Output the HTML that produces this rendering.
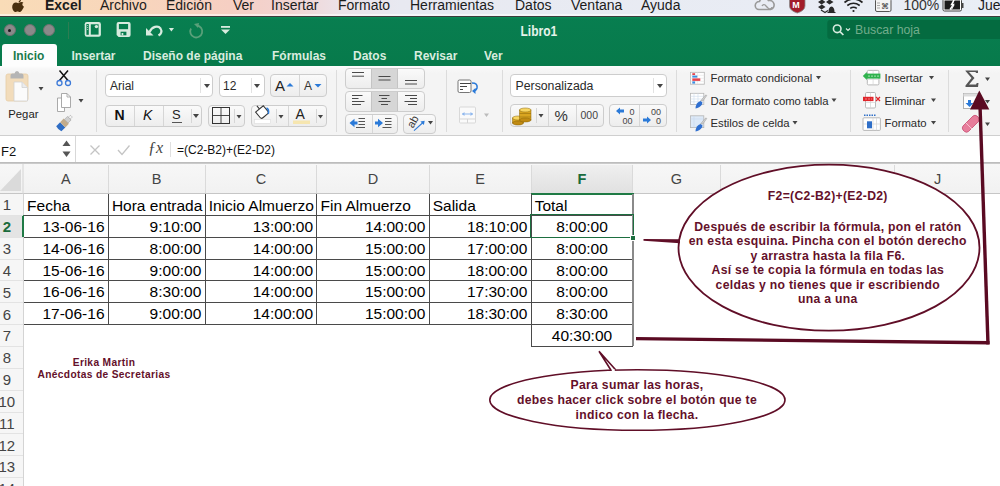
<!DOCTYPE html>
<html><head><meta charset="utf-8">
<style>
*{margin:0;padding:0;box-sizing:border-box}
html,body{width:1000px;height:486px;overflow:hidden;background:#fff;font-family:"Liberation Sans",sans-serif}
.a{position:absolute}
#menubar{left:0;top:0;width:1000px;height:16px;background:linear-gradient(90deg,#f9dcb7 0%,#f8d5bc 14%,#f6cfc3 23%,#f2d4d2 29%,#ece2e8 34%,#e8e9f1 40%,#e9eef6 100%);}
.mt{position:absolute;top:-3.5px;font-size:14px;color:#1c1c1c;white-space:nowrap}
#title{left:0;top:16px;width:1000px;height:50px;background:linear-gradient(#087e50,#077a4b)}
.tab{position:absolute;top:47.2px;transform:scaleY(1.14);transform-origin:0 0;font-size:12px;font-weight:bold;color:#d9ecdf;white-space:nowrap}
#ribbon{left:0;top:66px;width:1000px;height:70px;background:linear-gradient(#fdfdfd 0px,#f7f7f7 3px,#f4f4f4 8px);border-bottom:1px solid #cfcfcf}
.sep{position:absolute;width:1px;background:#dcdcdc}
.box{position:absolute;background:#fff;border:1px solid #cdcdcd;border-radius:4px}
.btn{position:absolute;background:linear-gradient(#fafafa,#ededed);border:1px solid #cdcdcd;border-radius:4px}
.dv{position:absolute;top:0;bottom:0;width:1px;background:#d6d6d6}
.arr{position:absolute;width:0;height:0;border-left:3px solid transparent;border-right:3px solid transparent;border-top:4.5px solid #444}
.rt{position:absolute;font-size:11.3px;color:#2a2a2a;white-space:nowrap}
#fbar{left:0;top:136px;width:1000px;height:26px;background:#fff}
#hdr{left:0;top:164px;width:1000px;height:29px;background:#f4f4f4;border-top:1px solid #d0d0d0;border-bottom:1px solid #c8c8c8}
.ch{position:absolute;top:8px;font-size:12.5px;color:#3c3c3c;text-align:center}
.rh{position:absolute;left:0;width:23px;font-size:12.5px;color:#3c3c3c;text-align:center}
.c{position:absolute;font-size:15.5px;color:#000;white-space:nowrap;margin-top:-0.7px}
</style></head><body>
<domain style="display:none">Computer-Use</domain>
<!-- MENU BAR -->
<div id="menubar" class="a">
  <div class="mt" style="left:45px;font-weight:bold">Excel</div>
  <div class="mt" style="left:100px">Archivo</div>
  <div class="mt" style="left:166px">Edición</div>
  <div class="mt" style="left:233px">Ver</div>
  <div class="mt" style="left:271px">Insertar</div>
  <div class="mt" style="left:338px">Formato</div>
  <div class="mt" style="left:410px">Herramientas</div>
  <div class="mt" style="left:515px">Datos</div>
  <div class="mt" style="left:571px">Ventana</div>
  <div class="mt" style="left:641px">Ayuda</div>
<svg class="a" style="left:0;top:0" width="1000" height="16">
 <!-- apple -->
 <path d="M18.3 3.2 C16.5 2.2 14.6 2.4 13.4 3.6 C11.6 5.4 11.9 9 13.6 11 C14.5 12 15.5 12.2 16.4 11.7 C17.3 11.3 17.8 11.3 18.6 11.7 C19.8 12.3 21 11.8 22 10.2 C22.6 9.2 23.5 8 24 6.8 C22 6 21.8 3.6 23.4 2.6 C22.1 1.4 20.2 2 18.3 3.2 Z" fill="#4a2f0e"/>
 <path d="M18.5 2.6 C18.6 1.2 19.6 0 21 -0.4 C21 1 20 2.4 18.5 2.6z" fill="#4a2f0e"/>
 <!-- creative cloud -->
 <path d="M759 9.5 a4 4 0 0 1 0.5 -8 a5 5 0 0 1 9 -1 a4.5 4.5 0 0 1 2 9 z" fill="none" stroke="#9a9a9a" stroke-width="1.6"/>
 <path d="M762 6 a2.2 2.2 0 0 1 4 0 l2 2 a2.2 2.2 0 0 0 4 -1" fill="none" stroke="#9a9a9a" stroke-width="1.3"/>
 <!-- mcafee -->
 <path d="M789.5 -1 h15.5 v7 q0 4.5 -7.75 7 q-7.75 -2.5 -7.75 -7z" fill="#a21d2a" stroke="#8a8a8a" stroke-width="0.8"/>
 <text x="792.3" y="8" font-family="Liberation Sans" font-weight="bold" font-size="9" fill="#fff">M</text>
 <!-- dropbox / bell -->
 <path d="M818 2 l4 -2.5 l3.5 2.5 l-4 2.5z M826 2 l3.5 -2.5 l4 2.5 l-4 2.5z M818 7 l4 -2.5 l3.5 2.5 l-4 2.5z" fill="#2a2a2a"/>
 <path d="M821 10 l4 2.5 l3 -2" fill="none" stroke="#2a2a2a" stroke-width="1.2"/>
 <path d="M828.5 12 q0 -5 3 -5.5 q3 0.5 3 5.5 h1 v1 h-8 v-1z" fill="#2a2a2a"/>
 <!-- wifi -->
 <path d="M844.5 2.5 q9 -7 18 0" fill="none" stroke="#222" stroke-width="1.6"/>
 <path d="M847.3 5.5 q6.2 -4.6 12.4 0" fill="none" stroke="#222" stroke-width="1.6"/>
 <path d="M850.2 8.4 q3.3 -2.4 6.6 0" fill="none" stroke="#222" stroke-width="1.6"/>
 <circle cx="853.5" cy="11" r="1.1" fill="#222"/>
 <!-- keyboard icon -->
 <rect x="875.5" y="-1" width="15.5" height="12.5" rx="1.5" fill="#f4f4f4" stroke="#555" stroke-width="1"/>
 <g stroke="#888" stroke-width="0.7"><line x1="877" y1="3" x2="880" y2="3"/><line x1="877" y1="5.5" x2="880" y2="5.5"/><line x1="877" y1="8" x2="880" y2="8"/></g>
 <text x="881" y="9" font-family="Liberation Sans" font-size="8" fill="#333">⌘</text>
 <!-- battery -->
 <rect x="943" y="-1" width="18.5" height="12" rx="1.5" fill="#fff" stroke="#444" stroke-width="1"/>
 <rect x="944.5" y="0.5" width="15.5" height="9" fill="#1c1c1c"/>
 <path d="M950 9.5 l3.5 -5 h-2 l2.5 -4.5" fill="none" stroke="#fff" stroke-width="1.4"/>
 <path d="M954 0.5 l-2 4.5 h2 l-2.5 4.5" fill="none" stroke="#fff" stroke-width="1.0"/>
 <rect x="962" y="3" width="1.5" height="5" fill="#444"/>
</svg>
<div class="mt" style="left:903.5px;color:#333">100%</div>
<div class="mt" style="left:978px">Jue</div>
</div>
<!-- TITLE BAR -->
<div id="title" class="a"></div>
<div class="a" style="left:0;top:13.8px;width:1000px;height:1.9px;background:rgba(255,255,255,0.55)"></div>
<div class="a" style="left:0;top:15.6px;width:1000px;height:1.1px;background:#3c3c3c"></div>
<div class="a" style="left:0;top:16.7px;width:1000px;height:2.5px;background:linear-gradient(#0d8b57,#087e50)"></div>
<!-- traffic lights -->
<div class="a" style="left:3.5px;top:24px;width:12px;height:12px;border-radius:50%;background:#8a8a8a;border:1px solid #6f6f6f"></div>
<div class="a" style="left:8px;top:28.5px;width:3px;height:3px;border-radius:50%;background:#1a1a1a"></div>
<div class="a" style="left:23.5px;top:24px;width:12px;height:12px;border-radius:50%;background:#8a8a8a;border:1px solid #6f6f6f"></div>
<div class="a" style="left:43px;top:24px;width:12px;height:12px;border-radius:50%;background:#8a8a8a;border:1px solid #6f6f6f"></div>
<div class="a" style="left:68px;top:22px;width:1px;height:17px;background:#2d7d52"></div>
<svg class="a" style="left:0;top:16px" width="1000" height="50">
 <!-- sheet icon -->
 <rect x="84.7" y="6.1" width="16.2" height="14.6" rx="2.2" fill="#d8ebdf"/>
 <rect x="86.4" y="8" width="2.4" height="10.8" fill="#077c4e"/>
 <g fill="#a9d0b8"><rect x="87.1" y="9" width="1" height="1"/><rect x="87.1" y="11" width="1" height="1"/><rect x="87.1" y="13" width="1" height="1"/></g>
 <rect x="90.8" y="8.3" width="7.8" height="10.3" fill="#077c4e"/>
 <circle cx="96.4" cy="10.6" r="1.7" fill="#d8ebdf"/>
 <!-- save icon -->
 <path d="M118.6 6.1 h10 q2 0 2 2 v10.9 q0 2 -2 2 h-10 l-2 -2 v-10.9 q0 -2 2 -2z" fill="#d8ebdf"/>
 <rect x="118.9" y="8" width="9.2" height="5.2" fill="#077c4e"/>
 <rect x="120.6" y="15.7" width="5.8" height="3.6" fill="#077c4e"/>
 <rect x="121.6" y="17" width="1.7" height="2.3" fill="#d8ebdf"/>
 <!-- undo -->
 <path d="M149.5 16 C152 10.5 158 9 160.5 12.5 C162.5 15.5 161 18 158.5 19.5" fill="none" stroke="#d8ebdf" stroke-width="2.2"/>
 <path d="M146 12 L146 19.5 L153.5 19.5z" fill="#d8ebdf"/>
 <path d="M168.8 12 h5.2 l-2.6 3.4z" fill="#d8ebdf"/>
 <!-- redo (faded) -->
 <path d="M197 9.5 a6 6 0 1 1 -6 3" fill="none" stroke="#5aa07a" stroke-width="1.8"/>
 <path d="M194 8 l5 -1 l-1 5z" fill="#5aa07a"/>
 <!-- customize -->
 <rect x="221" y="10" width="9" height="1.8" fill="#d8ebdf"/>
 <path d="M221 13.5 h9 l-4.5 4.5z" fill="#d8ebdf"/>
 <!-- search box -->
 <rect x="827.3" y="4" width="180" height="19" rx="3" fill="#046b40"/>
 <circle cx="837.2" cy="12.8" r="3.8" fill="none" stroke="#d8ebdf" stroke-width="1.6"/>
 <line x1="840" y1="15.6" x2="843.4" y2="19" stroke="#d8ebdf" stroke-width="1.7"/>
 <path d="M846 12.5 l2 2 l2 -2" fill="none" stroke="#d8ebdf" stroke-width="1.1"/>
</svg>
<div class="a" style="left:520.5px;top:22.6px;font-size:12px;font-weight:bold;color:#e6f2ea;transform:scaleY(1.15);transform-origin:0 0">Libro1</div>
<div class="a" style="left:855px;top:23px;font-size:12.3px;color:#72ad8c">Buscar hoja</div>
<div class="a" style="left:2px;top:44.3px;width:55px;height:22px;background:#fdfdfd;border-radius:3px 3px 0 0"></div>
<div class="a tab" style="left:13px;color:#1a7a4c">Inicio</div>
<div class="a tab" style="left:71.5px">Insertar</div>
<div class="a tab" style="left:143px">Diseño de página</div>
<div class="a tab" style="left:272px">Fórmulas</div>
<div class="a tab" style="left:353px">Datos</div>
<div class="a tab" style="left:414px">Revisar</div>
<div class="a tab" style="left:484px">Ver</div>
<!-- RIBBON -->
<div id="ribbon" class="a"></div>
<!-- separators -->
<div class="sep" style="left:96px;top:70px;height:62px"></div>
<div class="sep" style="left:336px;top:70px;height:62px"></div>
<div class="sep" style="left:445.5px;top:70px;height:62px"></div>
<div class="sep" style="left:502px;top:70px;height:62px"></div>
<div class="sep" style="left:675.5px;top:70px;height:62px"></div>
<div class="sep" style="left:849.5px;top:70px;height:62px"></div>
<div class="sep" style="left:947.8px;top:70px;height:62px"></div>
<!-- clipboard group -->
<svg class="a" style="left:0;top:66px" width="96" height="70">
 <rect x="6" y="8" width="22" height="27" rx="2" fill="#f2dcbb" stroke="#e6cda6" stroke-width="0.8"/>
 <path d="M10.5 12.5 v-3 q0 -2 2 -2 h2 q0.5 -2.5 2.5 -2.5 q2 0 2.5 2.5 h2 q2 0 2 2 v3z" fill="#b5b5b5"/>
 <path d="M14 16 h8 l5.5 5.5 v13.5 h-13.5z" fill="#fbfbfb" stroke="#d2d2d2" stroke-width="0.8"/>
 <path d="M22 16 v5.5 h5.5" fill="#ececec" stroke="#d2d2d2" stroke-width="0.8"/>
 <path d="M38.5 21 h5 l-2.5 3.5z" fill="#444"/>
 <!-- scissors -->
 <path d="M59.5 4.5 l8.5 10 M68 4.5 l-8.5 10" stroke="#111" stroke-width="1.5"/>
 <circle cx="59.5" cy="17" r="2.5" fill="none" stroke="#3d7ad8" stroke-width="1.3"/>
 <circle cx="68" cy="17" r="2.5" fill="none" stroke="#3d7ad8" stroke-width="1.3"/>
 <!-- copy -->
 <path d="M57.5 32 h5 l2 2 v11.5 h-7z" fill="#fff" stroke="#a0a0a0" stroke-width="0.9"/>
 <path d="M61.5 27.5 h5.5 l3.5 3.5 v10.5 h-9z" fill="#fff" stroke="#a0a0a0" stroke-width="0.9"/>
 <path d="M67 27.5 v3.5 h3.5" fill="none" stroke="#a0a0a0" stroke-width="0.8"/>
 <path d="M78.5 33 h5 l-2.5 3.5z" fill="#444"/>
 <!-- brush -->
 <g transform="translate(64.5 57) rotate(-45) scale(0.85)">
  <path d="M-9.5 -4.3 h6.5 v8.6 h-6.5 q-1.2 -4.3 0 -8.6z" fill="#2f6dc4"/>
  <rect x="-3" y="-4.3" width="6" height="8.6" fill="#c2ab8a"/>
  <rect x="3" y="-3" width="5" height="6" fill="#cfcfcf" stroke="#9a9a9a" stroke-width="0.6"/>
  <rect x="8" y="-1.6" width="3.5" height="3.2" rx="1" fill="#f4f4f4" stroke="#9a9a9a" stroke-width="0.6"/>
 </g>
</svg>
<div class="rt" style="left:8.3px;top:107.8px;font-size:11.3px;color:#222">Pegar</div>
<!-- font group -->
<div class="box" style="left:105px;top:74px;width:108px;height:23px"><div class="dv" style="left:94px;top:3px;bottom:3px;background:#e2e2e2"></div></div>
<div class="rt" style="left:110px;top:79px;font-size:12px">Arial</div>
<div class="arr" style="left:204px;top:84px"></div>
<div class="box" style="left:218.5px;top:74px;width:46px;height:23px"><div class="dv" style="left:31px;top:3px;bottom:3px;background:#e2e2e2"></div></div>
<div class="rt" style="left:223px;top:79px;font-size:12px">12</div>
<div class="arr" style="left:254px;top:84px"></div>
<div class="btn" style="left:269.5px;top:74px;width:57px;height:23px"><div class="dv" style="left:28px"></div></div>
<div class="btn" style="left:105px;top:104.5px;width:97px;height:22px"><div class="dv" style="left:28px"></div><div class="dv" style="left:57px"></div><div class="dv" style="left:84.5px;top:3px;bottom:3px"></div></div>
<div class="btn" style="left:207.5px;top:104.5px;width:37.5px;height:22px"><div class="dv" style="left:25px;top:3px;bottom:3px"></div></div>
<div class="btn" style="left:250.5px;top:104.5px;width:76px;height:22px"><div class="dv" style="left:24px;top:3px;bottom:3px"></div><div class="dv" style="left:36.5px"></div><div class="dv" style="left:64px;top:3px;bottom:3px"></div></div>
<div class="a" style="left:114.5px;top:107px;font-size:14px;font-weight:bold;color:#111">N</div>
<div class="a" style="left:143px;top:107px;font-size:14px;font-style:italic;color:#111">K</div>
<div class="a" style="left:172px;top:107px;font-size:13px;color:#222">S</div>
<div class="a" style="left:171.5px;top:121.5px;width:10px;height:1.2px;background:#555"></div>
<div class="arr" style="left:193px;top:114px"></div>
<svg class="a" style="left:0;top:66px" width="340" height="70">
 <!-- A up / A down -->
 <text x="275" y="24.5" font-family="Liberation Sans" font-size="15" fill="#222">A</text>
 <path d="M286.5 20.5 l3.5 -3.5 l3.5 3.5z" fill="#2b7ad8"/>
 <text x="304" y="23.5" font-family="Liberation Sans" font-size="12" fill="#333">A</text>
 <path d="M314.5 18 h7 l-3.5 3.5z" fill="#2b7ad8"/>
 <!-- borders grid -->
 <rect x="212.5" y="41.5" width="17" height="16" fill="none" stroke="#333" stroke-width="1"/>
 <line x1="221" y1="41.5" x2="221" y2="57.5" stroke="#333" stroke-width="0.9"/>
 <line x1="212.5" y1="49.5" x2="229.5" y2="49.5" stroke="#333" stroke-width="0.9"/>
 <path d="M236.5 49 h5 l-2.5 3.5z" fill="#444"/>
 <!-- fill bucket -->
 <g transform="rotate(-40 262 46)">
  <path d="M257 42 h10 v7 q0 2 -2 2 h-6 q-2 0 -2 -2z" fill="#fff" stroke="#333" stroke-width="1.1"/>
  <path d="M262 42 v-4" stroke="#333" stroke-width="1"/>
 </g>
 <path d="M266.5 42 q3 1.5 1.8 6" fill="none" stroke="#2b7ad8" stroke-width="1.5"/>
 <rect x="254.5" y="53.5" width="16" height="4" fill="#fff" stroke="#dcdcdc" stroke-width="0.6"/>
 <path d="M278.5 49 h5 l-2.5 3.5z" fill="#444"/>
 <!-- font color -->
 <text x="295.5" y="52.5" font-family="Liberation Sans" font-size="14" fill="#222">A</text>
 <rect x="293" y="54.5" width="17" height="3.5" fill="#f6e6b0"/>
 <path d="M318 49 h5 l-2.5 3.5z" fill="#444"/>
</svg>
<!-- alignment group -->
<div class="btn" style="left:344.5px;top:67.5px;width:80px;height:21px;overflow:hidden"><div class="a" style="left:25.5px;top:0;width:27px;height:21px;background:#d6d6d6;border-left:1px solid #c4c4c4;border-right:1px solid #c4c4c4"></div></div>
<div class="btn" style="left:344.5px;top:90.5px;width:80px;height:21px;overflow:hidden"><div class="a" style="left:25.5px;top:0;width:27px;height:21px;background:#d6d6d6;border-left:1px solid #c4c4c4;border-right:1px solid #c4c4c4"></div></div>
<div class="btn" style="left:344.5px;top:113.5px;width:53px;height:20px"><div class="dv" style="left:26px"></div></div>
<div class="btn" style="left:402.5px;top:113.5px;width:33.5px;height:20px"></div>
<svg class="a" style="left:336px;top:66px" width="170" height="70">
 <g stroke="#4a4a4a" stroke-width="1">
  <line x1="16" y1="6.5" x2="28" y2="6.5"/><line x1="16" y1="10.2" x2="28" y2="10.2"/>
  <line x1="42.5" y1="10.5" x2="54.5" y2="10.5"/><line x1="42.5" y1="14" x2="54.5" y2="14"/>
  <line x1="69" y1="14.5" x2="81" y2="14.5"/><line x1="69" y1="18" x2="81" y2="18"/>
  <line x1="16" y1="29.5" x2="26.5" y2="29.5"/><line x1="16" y1="32.5" x2="22.5" y2="32.5"/><line x1="16" y1="35.5" x2="28.5" y2="35.5"/><line x1="16" y1="38.5" x2="25" y2="38.5"/>
  <line x1="43" y1="29.5" x2="53.5" y2="29.5"/><line x1="45.5" y1="32.5" x2="51" y2="32.5"/><line x1="42.5" y1="35.5" x2="54.5" y2="35.5"/><line x1="45" y1="38.5" x2="52" y2="38.5"/>
  <line x1="69" y1="29.5" x2="81" y2="29.5"/><line x1="74" y1="32.5" x2="81" y2="32.5"/><line x1="68.5" y1="35.5" x2="81" y2="35.5"/><line x1="72" y1="38.5" x2="81" y2="38.5"/>
 </g>
 <g stroke="#555" stroke-width="1">
  <line x1="22.5" y1="52.5" x2="29" y2="52.5"/><line x1="22.5" y1="55.5" x2="29" y2="55.5"/><line x1="22.5" y1="58.5" x2="29" y2="58.5"/><line x1="20" y1="61.5" x2="29" y2="61.5"/>
  <line x1="49" y1="52.5" x2="55.5" y2="52.5"/><line x1="49" y1="55.5" x2="55.5" y2="55.5"/><line x1="49" y1="58.5" x2="55.5" y2="58.5"/><line x1="46.5" y1="61.5" x2="55.5" y2="61.5"/>
 </g>
 <path d="M13.5 57 l5 -4.2 v2.7 h3 v3 h-3 v2.7z" fill="#2b7ad8"/>
 <path d="M47 57 l-5 -4.2 v2.7 h-3 v3 h3 v2.7z" fill="#2b7ad8"/>
 <text x="0" y="4" text-anchor="middle" font-family="Liberation Sans" font-size="11" fill="#333" transform="translate(76.5 55.5) rotate(-60)">ab</text>
 <line x1="78" y1="64.7" x2="87" y2="56.5" stroke="#2b7ad8" stroke-width="1.1"/>
 <path d="M88.7 54.8 l-4.3 0.8 l3.5 3.5z" fill="#2b7ad8"/>
 <path d="M92 55 h5 l-2.5 3.5z" fill="#444"/>
 <!-- wrap text -->
 <rect x="122" y="14" width="13" height="12.5" rx="1.5" fill="#fff" stroke="#666" stroke-width="0.9"/>
 <g stroke="#444" stroke-width="1"><line x1="124" y1="17.5" x2="135" y2="17.5"/><line x1="124" y1="20.5" x2="131" y2="20.5"/><line x1="124" y1="23.5" x2="127" y2="23.5"/></g>
 <path d="M136 17 q6 0 5 5 q-1 3 -4 3" fill="none" stroke="#2b7ad8" stroke-width="1.6"/>
 <path d="M136 25 l3.5 -3 v6z" fill="#2b7ad8"/>
 <!-- merge -->
 <rect x="123.5" y="41" width="16" height="16" rx="1" fill="#fafafa" stroke="#d5d5d5" stroke-width="0.9"/>
 <line x1="123.5" y1="53" x2="139.5" y2="53" stroke="#d5d5d5"/>
 <line x1="131.5" y1="53" x2="131.5" y2="57" stroke="#d5d5d5"/>
 <line x1="126" y1="48" x2="137" y2="48" stroke="#8fb8ee" stroke-width="1"/>
 <path d="M126 48 l2.5 -2 v4z M137 48 l-2.5 -2 v4z" fill="#8fb8ee"/>
 <path d="M148 47.5 h5 l-2.5 3.5z" fill="#bbb"/>
</svg>
<!-- number group -->
<div class="box" style="left:510px;top:74px;width:156.5px;height:23px"><div class="dv" style="left:142px;top:3px;bottom:3px;background:#e2e2e2"></div></div>
<div class="rt" style="left:515.5px;top:79px;font-size:12.3px">Personalizada</div>
<div class="arr" style="left:656.5px;top:84px"></div>
<div class="btn" style="left:510px;top:104px;width:94px;height:23px"><div class="dv" style="left:25px;top:3px;bottom:3px"></div><div class="dv" style="left:36.5px"></div><div class="dv" style="left:65px"></div></div>
<div class="btn" style="left:609px;top:104px;width:57.5px;height:23px"><div class="dv" style="left:28.5px"></div></div>
<svg class="a" style="left:500px;top:66px" width="180" height="70">
 <g stroke="#8a6508" stroke-width="0.5">
 <rect x="12.5" y="52" width="11" height="5" fill="#d9a520"/>
 <ellipse cx="18" cy="57" rx="5.5" ry="2" fill="#c08a12"/>
 <ellipse cx="18" cy="52" rx="5.5" ry="2" fill="#f7d561"/>
 <rect x="19.5" y="44" width="11.5" height="10" fill="#d9a520"/>
 <line x1="19.5" y1="47.5" x2="31" y2="47.5"/><line x1="19.5" y1="51" x2="31" y2="51"/>
 <ellipse cx="25.25" cy="54" rx="5.75" ry="2" fill="#c08a12"/>
 <ellipse cx="25.25" cy="44" rx="5.75" ry="2" fill="#f7d561"/>
 </g>
 <path d="M38.5 48 h5 l-2.5 3.5z" fill="#444"/>
 <text x="554.5" y="55" font-family="Liberation Sans" font-size="15" fill="#333" transform="translate(-500 0)">%</text>
 <text x="580.5" y="53" font-family="Liberation Sans" font-size="10.5" fill="#444" transform="translate(-500 0)">000</text>
 <path d="M116 45 l4 -3.5 v2 h4 v3 h-4 v2z" fill="#2b7ad8"/>
 <text x="129.5" y="48.5" font-family="Liberation Sans" font-size="9" fill="#444">0</text>
 <text x="122.5" y="57.5" font-family="Liberation Sans" font-size="9" fill="#444">00</text>
 <text x="151" y="48.5" font-family="Liberation Sans" font-size="9" fill="#444">00</text>
 <text x="156" y="57.5" font-family="Liberation Sans" font-size="9" fill="#444">0</text>
 <path d="M151 54 l-4 -3.5 v2 h-4 v3 h4 v2z" fill="#2b7ad8"/>
</svg>
<!-- styles group -->
<svg class="a" style="left:680px;top:66px" width="320" height="70">
 <!-- cond format -->
 <rect x="10.5" y="6.3" width="13.8" height="11.9" fill="#fff" stroke="#b5b5b5" stroke-width="0.8"/>
 <g stroke="#e3e3e3" stroke-width="0.6"><line x1="10.5" y1="9.3" x2="24.3" y2="9.3"/><line x1="10.5" y1="12.3" x2="24.3" y2="12.3"/><line x1="10.5" y1="15.3" x2="24.3" y2="15.3"/><line x1="17.4" y1="6.3" x2="17.4" y2="18.2"/></g>
 <rect x="12.3" y="7.2" width="2.8" height="1.8" fill="#e5424d"/>
 <rect x="12.3" y="9.6" width="5" height="2" fill="#3d8ee0"/>
 <rect x="12.3" y="12.4" width="8" height="2.5" fill="#e5424d"/>
 <rect x="12.3" y="15.4" width="2.8" height="2.2" fill="#3d8ee0"/>
 <!-- table format -->
 <rect x="10.5" y="27.3" width="13.3" height="11.2" fill="#fff" stroke="#b5b5b5" stroke-width="0.8"/>
 <g stroke="#cfdcec" stroke-width="0.6"><line x1="10.5" y1="30.3" x2="23.8" y2="30.3"/><line x1="10.5" y1="33" x2="23.8" y2="33"/><line x1="10.5" y1="35.8" x2="23.8" y2="35.8"/><line x1="14" y1="27.3" x2="14" y2="38.5"/><line x1="18" y1="27.3" x2="18" y2="38.5"/></g>
 <path d="M20.5 35 l4.5 -5.5 q1.2 -1 1.8 0 l-4 5.5z" fill="#d0d0d0" stroke="#999" stroke-width="0.5"/>
 <path d="M15.5 42.5 q0 -4 3 -6.5 l2 -1 l2 1.5 l-0.5 2 q-2.5 3.5 -6.5 4z" fill="#2f6fd0"/>
 <!-- cell styles -->
 <rect x="10.5" y="49.8" width="13.3" height="11.8" fill="#dde9f7" stroke="#b5b5b5" stroke-width="0.8"/>
 <g stroke="#c7d8ee" stroke-width="0.6"><line x1="10.5" y1="53" x2="23.8" y2="53"/><line x1="14" y1="49.8" x2="14" y2="61.6"/></g>
 <path d="M20.5 58 l4.5 -5.5 q1.2 -1 1.8 0 l-4 5.5z" fill="#d0d0d0" stroke="#999" stroke-width="0.5"/>
 <path d="M15.5 65.5 q0 -4 3 -6.5 l2 -1 l2 1.5 l-0.5 2 q-2.5 3.5 -6.5 4z" fill="#2f6fd0"/>
 <path d="M136 10 h5 l-2.5 3.5z" fill="#444"/>
 <path d="M151.5 32.5 h5 l-2.5 3.5z" fill="#444"/>
 <path d="M112.5 55 h5 l-2.5 3.5z" fill="#444"/>
 <!-- insert cells -->
 <rect x="187.3" y="4.4" width="11.6" height="14.5" rx="1.2" fill="#fff" stroke="#b0b0b0" stroke-width="0.9"/>
 <g stroke="#d4d4d4" stroke-width="0.7"><line x1="187.3" y1="13.5" x2="198.9" y2="13.5"/><line x1="193.1" y1="4.4" x2="193.1" y2="18.9"/></g>
 <rect x="186" y="7.6" width="14.4" height="5" fill="#2fb24c"/>
 <path d="M182.8 10.1 l4 -4 v8z" fill="#2fb24c"/>
 <line x1="188" y1="10.1" x2="199" y2="10.1" stroke="#c9efd2" stroke-width="0.8" stroke-dasharray="2 1"/>
 <!-- delete cells -->
 <rect x="185.5" y="26.5" width="10" height="15.5" rx="1.2" fill="#fff" stroke="#b0b0b0" stroke-width="0.9"/>
 <g stroke="#d4d4d4" stroke-width="0.7"><line x1="185.5" y1="36.5" x2="195.5" y2="36.5"/><line x1="190.5" y1="26.5" x2="190.5" y2="42"/></g>
 <rect x="183" y="30.8" width="10.5" height="4.3" fill="#e0252b"/>
 <line x1="185" y1="33" x2="192" y2="33" stroke="#f5b0b2" stroke-width="0.7" stroke-dasharray="2 1"/>
 <path d="M196 31 l4 4 M200 31 l-4 4" stroke="#e0252b" stroke-width="1.3"/>
 <!-- format cells -->
 <rect x="183" y="51.8" width="17.4" height="12.6" rx="1" fill="#fff" stroke="#b0b0b0" stroke-width="0.9"/>
 <g stroke="#d4d4d4" stroke-width="0.7"><line x1="183" y1="58" x2="200.4" y2="58"/><line x1="193" y1="51.8" x2="193" y2="64.4"/><line x1="196.5" y1="51.8" x2="196.5" y2="64.4"/></g>
 <rect x="187" y="55.3" width="5" height="7" fill="#2f6fc8"/>
 <path d="M184 49.3 h12.5" stroke="#2f6fc8" stroke-width="1.6" stroke-dasharray="1.5 1"/>
 <path d="M249 10 h5 l-2.5 3.5z" fill="#444"/>
 <path d="M251 32.5 h5 l-2.5 3.5z" fill="#444"/>
 <path d="M251 55 h5 l-2.5 3.5z" fill="#444"/>
 <!-- sigma -->
 <path d="M285.5 4.5 h12.5 v2.5 h-2 l-0.5 -1 h-6.5 l5.5 6 l-5.5 6.5 h7 l0.8 -1.5 h1.7 l-0.5 4 h-12.5 l0 -1.5 l6 -7.5 l-6 -7z" fill="#555"/>
 <path d="M305 11.5 h5 l-2.5 3.5z" fill="#444"/>
 <!-- fill -->
 <rect x="283.5" y="27.5" width="15" height="15" fill="#fff" stroke="#aaa" stroke-width="0.9"/>
 <rect x="283.5" y="27.5" width="15" height="3" fill="#ddd"/>
 <path d="M288 34 h3 v3 h2.5 l-4 4 l-4 -4 h2.5z" fill="#2b7ad8"/>
 <!-- eraser -->
 <path d="M283 60 l10 -10 q2 -1.5 4 0 l1.5 1.5 q1.5 2 0 4 l-10 10 q-2 1.5 -4 0 l-1.5 -1.5 q-1.5 -2 0 -4z" fill="#e77d9b" stroke="#c64a70" stroke-width="0.8"/>
 <path d="M286 57 l6 6" stroke="#f7c1d0" stroke-width="1"/>
 <path d="M305 34 h5 l-2.5 3.5z" fill="#444"/>
 <path d="M305 56.5 h5 l-2.5 3.5z" fill="#444"/>
</svg>
<div class="rt" style="left:710.5px;top:71.5px">Formato condicional</div>
<div class="rt" style="left:710.5px;top:94.6px">Dar formato como tabla</div>
<div class="rt" style="left:710.5px;top:117px">Estilos de celda</div>
<div class="rt" style="left:884.5px;top:71.5px">Insertar</div>
<div class="rt" style="left:884.5px;top:94.6px">Eliminar</div>
<div class="rt" style="left:884.5px;top:117px">Formato</div>
<!-- FORMULA BAR -->
<div id="fbar" class="a"></div>
<div class="a" style="left:1px;top:143.5px;font-size:13px;color:#111">F2</div>
<svg class="a" style="left:0;top:136px" width="300" height="26">
 <path d="M62.5 10 l4 -5.5 l4 5.5z" fill="#555"/>
 <path d="M62.5 15.5 l4 5.5 l4 -5.5z" fill="#555"/>
 <line x1="75.5" y1="0" x2="75.5" y2="26" stroke="#d8d8d8"/>
 <path d="M90.5 9.5 l9 9 M99.5 9.5 l-9 9" stroke="#c4c4c4" stroke-width="1.3"/>
 <path d="M118 14 l4 4.5 l7.5 -9" fill="none" stroke="#c4c4c4" stroke-width="1.3"/>
 <line x1="170.5" y1="6" x2="170.5" y2="21" stroke="#e0e0e0"/>
</svg>
<div class="a" style="left:148px;top:139px;font-family:'Liberation Serif',serif;font-style:italic;font-size:16px;color:#444">ƒx</div>
<div class="a" style="left:177px;top:143px;font-size:12px;color:#111">=(C2-B2)+(E2-D2)</div>
<div class="a" style="left:0;top:161.5px;width:1000px;height:3px;background:#cacaca;border-top:1px solid #bdbdbd;border-bottom:1px solid #c2c2c2"></div>
<!-- HEADERS -->
<div class="a" style="left:0;top:164px;width:1000px;height:29.5px;background:linear-gradient(#f7f7f7,#f1f1f1)"></div>
<div class="a" style="left:0;top:192.8px;width:1000px;height:1.6px;background:#c6c6c6"></div>
<svg class="a" style="left:0;top:164px" width="24" height="30"><path d="M0 27 L21 5 L21 27z" fill="#dadada"/><line x1="23" y1="0" x2="23" y2="30" stroke="#d4d4d4"/></svg>
<div class="a" style="left:531.1px;top:164.5px;width:101.8px;height:29px;background:linear-gradient(#efefef,#e0e0e0)"></div>
<div class="a" style="left:107.8px;top:165px;width:1px;height:28px;background:#dadada"></div>
<div class="a" style="left:204.6px;top:165px;width:1px;height:28px;background:#dadada"></div>
<div class="a" style="left:316.4px;top:165px;width:1px;height:28px;background:#dadada"></div>
<div class="a" style="left:428.6px;top:165px;width:1px;height:28px;background:#dadada"></div>
<div class="a" style="left:530.6px;top:165px;width:1px;height:28px;background:#dadada"></div>
<div class="a" style="left:632.4px;top:165px;width:1px;height:28px;background:#dadada"></div>
<div class="a" style="left:719.5px;top:165px;width:1px;height:28px;background:#dadada"></div>
<div class="a" style="left:806.5px;top:165px;width:1px;height:28px;background:#dadada"></div>
<div class="a" style="left:893.5px;top:165px;width:1px;height:28px;background:#dadada"></div>
<div class="a" style="left:980.5px;top:165px;width:1px;height:28px;background:#dadada"></div>
<div class="a" style="left:23.5px;width:84.8px;top:169px;line-height:20px;text-align:center;font-size:14.5px;color:#444;font-weight:normal">A</div>
<div class="a" style="left:108.3px;width:96.8px;top:169px;line-height:20px;text-align:center;font-size:14.5px;color:#444;font-weight:normal">B</div>
<div class="a" style="left:205.1px;width:111.8px;top:169px;line-height:20px;text-align:center;font-size:14.5px;color:#444;font-weight:normal">C</div>
<div class="a" style="left:316.9px;width:112.2px;top:169px;line-height:20px;text-align:center;font-size:14.5px;color:#444;font-weight:normal">D</div>
<div class="a" style="left:429.1px;width:102.0px;top:169px;line-height:20px;text-align:center;font-size:14.5px;color:#444;font-weight:normal">E</div>
<div class="a" style="left:531.1px;width:101.8px;top:169px;line-height:20px;text-align:center;font-size:14.5px;color:#1a6b3c;font-weight:bold">F</div>
<div class="a" style="left:632.9px;width:87.1px;top:169px;line-height:20px;text-align:center;font-size:14.5px;color:#444;font-weight:normal">G</div>
<div class="a" style="left:720px;width:87.0px;top:169px;line-height:20px;text-align:center;font-size:14.5px;color:#444;font-weight:normal">H</div>
<div class="a" style="left:807px;width:87.0px;top:169px;line-height:20px;text-align:center;font-size:14.5px;color:#444;font-weight:normal">I</div>
<div class="a" style="left:894px;width:87.0px;top:169px;line-height:20px;text-align:center;font-size:14.5px;color:#444;font-weight:normal">J</div>
<div class="a" style="left:531.1px;top:192.5px;width:102.8px;height:2px;background:#1f7a45"></div>
<div class="a" style="left:0;top:193.5px;width:23px;height:292.5px;background:#f6f6f6"></div>
<div class="a" style="left:22.5px;top:193.5px;width:1px;height:292.5px;background:#d4d4d4"></div>
<div class="a" style="left:0;top:215.35px;width:22.5px;height:21.85px;background:#e4e4e4"></div>
<div class="a" style="left:22px;top:215.35px;width:2px;height:21.85px;background:#1f7a45"></div>
<div class="a" style="left:0;top:214.85px;width:23px;height:1px;background:#e3e3e3"></div>
<div class="a" style="left:0;top:236.70px;width:23px;height:1px;background:#e3e3e3"></div>
<div class="a" style="left:0;top:258.55px;width:23px;height:1px;background:#e3e3e3"></div>
<div class="a" style="left:0;top:280.40px;width:23px;height:1px;background:#e3e3e3"></div>
<div class="a" style="left:0;top:302.25px;width:23px;height:1px;background:#e3e3e3"></div>
<div class="a" style="left:0;top:324.10px;width:23px;height:1px;background:#e3e3e3"></div>
<div class="a" style="left:0;top:345.95px;width:23px;height:1px;background:#e3e3e3"></div>
<div class="a" style="left:0;top:367.80px;width:23px;height:1px;background:#e3e3e3"></div>
<div class="a" style="left:0;top:389.65px;width:23px;height:1px;background:#e3e3e3"></div>
<div class="a" style="left:0;top:411.50px;width:23px;height:1px;background:#e3e3e3"></div>
<div class="a" style="left:0;top:433.35px;width:23px;height:1px;background:#e3e3e3"></div>
<div class="a" style="left:0;top:455.20px;width:23px;height:1px;background:#e3e3e3"></div>
<div class="a" style="left:0;top:477.05px;width:23px;height:1px;background:#e3e3e3"></div>
<div class="a" style="left:0;top:498.90px;width:23px;height:1px;background:#e3e3e3"></div>
<div class="a" style="left:-2.7px;width:19px;margin-top:-0.4px;top:194.68px;line-height:22px;text-align:center;font-size:15px;color:#444;font-weight:normal">1</div>
<div class="a" style="left:-2.7px;width:19px;margin-top:-0.4px;top:216.53px;line-height:22px;text-align:center;font-size:15px;color:#1a6b3c;font-weight:bold">2</div>
<div class="a" style="left:-2.7px;width:19px;margin-top:-0.4px;top:238.38px;line-height:22px;text-align:center;font-size:15px;color:#444;font-weight:normal">3</div>
<div class="a" style="left:-2.7px;width:19px;margin-top:-0.4px;top:260.23px;line-height:22px;text-align:center;font-size:15px;color:#444;font-weight:normal">4</div>
<div class="a" style="left:-2.7px;width:19px;margin-top:-0.4px;top:282.08px;line-height:22px;text-align:center;font-size:15px;color:#444;font-weight:normal">5</div>
<div class="a" style="left:-2.7px;width:19px;margin-top:-0.4px;top:303.93px;line-height:22px;text-align:center;font-size:15px;color:#444;font-weight:normal">6</div>
<div class="a" style="left:-2.7px;width:19px;margin-top:-0.4px;top:325.78px;line-height:22px;text-align:center;font-size:15px;color:#444;font-weight:normal">7</div>
<div class="a" style="left:-2.7px;width:19px;margin-top:-0.4px;top:347.63px;line-height:22px;text-align:center;font-size:15px;color:#444;font-weight:normal">8</div>
<div class="a" style="left:-2.7px;width:19px;margin-top:-0.4px;top:369.48px;line-height:22px;text-align:center;font-size:15px;color:#444;font-weight:normal">9</div>
<div class="a" style="left:-2.7px;width:19px;margin-top:-0.4px;top:391.33px;line-height:22px;text-align:center;font-size:15px;color:#444;font-weight:normal">10</div>
<div class="a" style="left:-2.7px;width:19px;margin-top:-0.4px;top:413.18px;line-height:22px;text-align:center;font-size:15px;color:#444;font-weight:normal">11</div>
<div class="a" style="left:-2.7px;width:19px;margin-top:-0.4px;top:435.03px;line-height:22px;text-align:center;font-size:15px;color:#444;font-weight:normal">12</div>
<div class="a" style="left:-2.7px;width:19px;margin-top:-0.4px;top:456.88px;line-height:22px;text-align:center;font-size:15px;color:#444;font-weight:normal">13</div>
<div class="a" style="left:-2.7px;width:19px;margin-top:-0.4px;top:478.73px;line-height:22px;text-align:center;font-size:15px;color:#444;font-weight:normal">14</div>
<div class="a" style="left:23.5px;top:214.85px;width:507.6px;height:1px;background:#4a4a4a"></div>
<div class="a" style="left:23.5px;top:236.70px;width:507.6px;height:1px;background:#4a4a4a"></div>
<div class="a" style="left:23.5px;top:258.55px;width:507.6px;height:1px;background:#4a4a4a"></div>
<div class="a" style="left:23.5px;top:280.40px;width:507.6px;height:1px;background:#4a4a4a"></div>
<div class="a" style="left:23.5px;top:302.25px;width:507.6px;height:1px;background:#4a4a4a"></div>
<div class="a" style="left:23.5px;top:324.10px;width:507.6px;height:1px;background:#4a4a4a"></div>
<div class="a" style="left:531.1px;top:214.85px;width:101.8px;height:1px;background:#4a4a4a"></div>
<div class="a" style="left:531.1px;top:236.70px;width:101.8px;height:1px;background:#4a4a4a"></div>
<div class="a" style="left:531.1px;top:258.55px;width:101.8px;height:1px;background:#4a4a4a"></div>
<div class="a" style="left:531.1px;top:280.40px;width:101.8px;height:1px;background:#4a4a4a"></div>
<div class="a" style="left:531.1px;top:302.25px;width:101.8px;height:1px;background:#4a4a4a"></div>
<div class="a" style="left:531.1px;top:324.10px;width:101.8px;height:1px;background:#4a4a4a"></div>
<div class="a" style="left:531.1px;top:345.95px;width:101.8px;height:1px;background:#4a4a4a"></div>
<div class="a" style="left:107.8px;top:193.5px;width:1px;height:131.10px;background:#4a4a4a"></div>
<div class="a" style="left:204.6px;top:193.5px;width:1px;height:131.10px;background:#4a4a4a"></div>
<div class="a" style="left:316.4px;top:193.5px;width:1px;height:131.10px;background:#4a4a4a"></div>
<div class="a" style="left:428.6px;top:193.5px;width:1px;height:131.10px;background:#4a4a4a"></div>
<div class="a" style="left:530.6px;top:193.5px;width:1px;height:131.10px;background:#4a4a4a"></div>
<div class="a" style="left:530.6px;top:324.60px;width:1px;height:21.85px;background:#4a4a4a"></div>
<div class="a" style="left:632.4px;top:193.5px;width:1.5px;height:152.95px;background:#8a8a8a"></div>
<div class="c" style="left:27.1px;top:194.68px;line-height:22px;margin-top:-0.1px">Fecha</div>
<div class="c" style="left:111.9px;top:194.68px;line-height:22px;margin-top:-0.1px">Hora entrada</div>
<div class="c" style="left:208.7px;top:194.68px;line-height:22px;margin-top:-0.1px">Inicio Almuerzo</div>
<div class="c" style="left:320.5px;top:194.68px;line-height:22px;margin-top:-0.1px">Fin Almuerzo</div>
<div class="c" style="left:432.7px;top:194.68px;line-height:22px;margin-top:-0.1px">Salida</div>
<div class="c" style="left:534.7px;top:194.68px;line-height:22px;margin-top:-0.1px">Total</div>
<div class="c" style="left:23.5px;width:81.0px;text-align:right;top:216.53px;line-height:22px">13-06-16</div>
<div class="c" style="left:108.3px;width:93.0px;text-align:right;top:216.53px;line-height:22px">9:10:00</div>
<div class="c" style="left:205.1px;width:108.0px;text-align:right;top:216.53px;line-height:22px">13:00:00</div>
<div class="c" style="left:316.9px;width:108.4px;text-align:right;top:216.53px;line-height:22px">14:00:00</div>
<div class="c" style="left:429.1px;width:98.2px;text-align:right;top:216.53px;line-height:22px">18:10:00</div>
<div class="c" style="left:531.1px;width:101.8px;text-align:center;top:216.53px;line-height:22px">8:00:00</div>
<div class="c" style="left:23.5px;width:81.0px;text-align:right;top:238.38px;line-height:22px">14-06-16</div>
<div class="c" style="left:108.3px;width:93.0px;text-align:right;top:238.38px;line-height:22px">8:00:00</div>
<div class="c" style="left:205.1px;width:108.0px;text-align:right;top:238.38px;line-height:22px">14:00:00</div>
<div class="c" style="left:316.9px;width:108.4px;text-align:right;top:238.38px;line-height:22px">15:00:00</div>
<div class="c" style="left:429.1px;width:98.2px;text-align:right;top:238.38px;line-height:22px">17:00:00</div>
<div class="c" style="left:531.1px;width:101.8px;text-align:center;top:238.38px;line-height:22px">8:00:00</div>
<div class="c" style="left:23.5px;width:81.0px;text-align:right;top:260.23px;line-height:22px">15-06-16</div>
<div class="c" style="left:108.3px;width:93.0px;text-align:right;top:260.23px;line-height:22px">9:00:00</div>
<div class="c" style="left:205.1px;width:108.0px;text-align:right;top:260.23px;line-height:22px">14:00:00</div>
<div class="c" style="left:316.9px;width:108.4px;text-align:right;top:260.23px;line-height:22px">15:00:00</div>
<div class="c" style="left:429.1px;width:98.2px;text-align:right;top:260.23px;line-height:22px">18:00:00</div>
<div class="c" style="left:531.1px;width:101.8px;text-align:center;top:260.23px;line-height:22px">8:00:00</div>
<div class="c" style="left:23.5px;width:81.0px;text-align:right;top:282.08px;line-height:22px">16-06-16</div>
<div class="c" style="left:108.3px;width:93.0px;text-align:right;top:282.08px;line-height:22px">8:30:00</div>
<div class="c" style="left:205.1px;width:108.0px;text-align:right;top:282.08px;line-height:22px">14:00:00</div>
<div class="c" style="left:316.9px;width:108.4px;text-align:right;top:282.08px;line-height:22px">15:00:00</div>
<div class="c" style="left:429.1px;width:98.2px;text-align:right;top:282.08px;line-height:22px">17:30:00</div>
<div class="c" style="left:531.1px;width:101.8px;text-align:center;top:282.08px;line-height:22px">8:00:00</div>
<div class="c" style="left:23.5px;width:81.0px;text-align:right;top:303.93px;line-height:22px">17-06-16</div>
<div class="c" style="left:108.3px;width:93.0px;text-align:right;top:303.93px;line-height:22px">9:00:00</div>
<div class="c" style="left:205.1px;width:108.0px;text-align:right;top:303.93px;line-height:22px">14:00:00</div>
<div class="c" style="left:316.9px;width:108.4px;text-align:right;top:303.93px;line-height:22px">15:00:00</div>
<div class="c" style="left:429.1px;width:98.2px;text-align:right;top:303.93px;line-height:22px">18:30:00</div>
<div class="c" style="left:531.1px;width:101.8px;text-align:center;top:303.93px;line-height:22px">8:30:00</div>
<div class="c" style="left:531.1px;width:101.8px;text-align:center;top:325.78px;line-height:22px">40:30:00</div>
<div class="a" style="left:529.8px;top:214.4px;width:104.2px;height:23.5px;border:1.8px solid #1d6f40"></div>
<div class="a" style="left:629.9px;top:234.70px;width:6px;height:6px;background:#1d6f40;border:1px solid #fff"></div>
<svg class="a" style="left:0;top:0" width="1000" height="486">
 <ellipse cx="829" cy="247.7" rx="150.5" ry="83" fill="#fff" stroke="#600e27" stroke-width="1.8"/>
 <path d="M643.5 239 L643.5 240.8 L680 243.2 L680 239.2 Z" fill="#600e27"/>
 <ellipse cx="637.4" cy="400" rx="147.6" ry="30.3" fill="#fff" stroke="#600e27" stroke-width="1.6"/>
 <path d="M611 370.2 L599 351.2 L615.6 369.8" fill="#fff" stroke="#600e27" stroke-width="1.6" stroke-linejoin="miter"/>
 <line x1="612" y1="370.3" x2="614.8" y2="370.3" stroke="#fff" stroke-width="1.8"/>
 <path d="M636 338.6 L989.5 342.8" stroke="#5a0a22" stroke-width="3.4"/>
 <path d="M988 344.4 L980 105" stroke="#5a0a22" stroke-width="3.4"/>
 <path d="M979.3 90.6 L970 109.6 L989.3 109.6 Z" fill="#5a0a22"/>
</svg>
<div class="a" style="left:677.8px;width:300px;top:188.5px;text-align:center;font-size:12.2px;letter-spacing:0.3px;font-weight:bold;color:#64102a;line-height:14.66px">F2=(C2-B2)+(E2-D2)</div>
<div class="a" style="left:677.8px;width:300px;top:219.5px;text-align:center;font-size:12.2px;letter-spacing:0.3px;font-weight:bold;color:#64102a;line-height:14.6px">Después de escribir la fórmula, pon el ratón<br>en esta esquina. Pincha con el botón derecho<br>y arrastra hasta la fila F6.<br>Así se te copia la fórmula en todas las<br>celdas y no tienes que ir escribiendo<br>una a una</div>
<div class="a" style="left:487px;width:300px;top:378.3px;text-align:center;font-size:12.2px;letter-spacing:0.3px;font-weight:bold;color:#64102a;line-height:14.75px">Para sumar las horas,<br>debes hacer click sobre el botón que te<br>indico con la flecha.</div>
<div class="a" style="left:4px;width:200px;top:356.5px;text-align:center;font-size:10.2px;letter-spacing:0.35px;font-weight:bold;color:#64102a;line-height:12.6px">Erika Martin<br>Anécdotas de Secretarias</div>
</body></html>
